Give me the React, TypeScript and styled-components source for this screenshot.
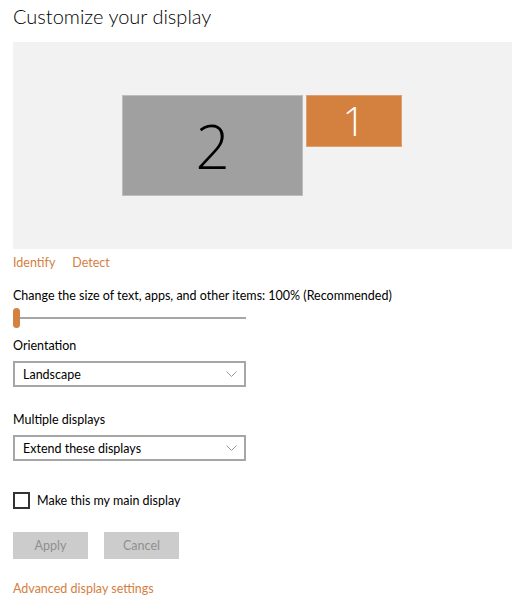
import React from "react";
import styled, { createGlobalStyle } from "styled-components";

const Global = createGlobalStyle`
  html, body { margin: 0; padding: 0; background: #ffffff; }
  body { font-family: Lato, "Open Sans", sans-serif; color: #000; }
`;

const ORANGE = "#d4803f";

const Page = styled.div`
  width: 520px;
  height: 601px;
  box-sizing: border-box;
  padding: 0 8px 0 13px;
  display: flex;
  flex-direction: column;
  overflow: hidden;
  & > * { flex-shrink: 0; }
`;

const Title = styled.h1`
  margin: 0;
  height: 42px;
  line-height: 33px;
  font-size: 20px;
  font-weight: 300;
`;

const Canvas = styled.div`
  width: 499px;
  height: 207px;
  background: #f2f2f2;
  box-sizing: border-box;
  padding: 53px 0 0 109px;
  display: flex;
  align-items: flex-start;
  gap: 3px;
`;

const Monitor = styled.div<{ $w: number; $h: number; $active?: boolean }>`
  width: ${(p) => p.$w}px;
  height: ${(p) => p.$h}px;
  box-sizing: border-box;
  background: ${(p) => (p.$active ? ORANGE : "#a0a0a0")};
  border: 1px solid ${(p) => (p.$active ? "#dea071" : "#bdbdbd")};
  color: ${(p) => (p.$active ? "#fff" : "#000")};
  display: flex;
  align-items: center;
  justify-content: center;
  font-family: "Open Sans", sans-serif;
  font-weight: 300;
  font-size: ${(p) => (p.$active ? 40 : 60)}px;
  line-height: 1;
`;

const Links = styled.div`
  display: flex;
  gap: 17px;
  margin-top: 3px;
  height: 20px;
  align-items: center;
`;

const Link = styled.a`
  color: ${ORANGE};
  font-size: 12.5px;
  text-decoration: none;
  cursor: pointer;
`;

const Label = styled.div<{ $mt: number }>`
  font-size: 12.5px;
  margin-top: ${(p) => p.$mt}px;
  height: 20px;
  line-height: 20px;
`;

const Slider = styled.div`
  position: relative;
  width: 233px;
  height: 20px;
  margin-top: 2px;
  display: flex;
  align-items: center;
`;

const Track = styled.div`
  flex: 1;
  height: 2px;
  background: #a6a6a6;
`;

const Thumb = styled.div`
  position: absolute;
  left: 0;
  top: 0;
  width: 7px;
  height: 20px;
  border-radius: 4px;
  background: ${ORANGE};
`;

const Select = styled.div`
  width: 233px;
  height: 26px;
  box-sizing: border-box;
  border: 2px solid #a6a6a6;
  margin-top: 5px;
  padding: 0 7px 0 8px;
  display: flex;
  align-items: center;
  justify-content: space-between;
  font-size: 12.5px;
`;

const Chevron = () => (
  <svg width="11" height="6" viewBox="0 0 11 6">
    <path d="M0.5 0.5 L5.5 5.5 L10.5 0.5" fill="none" stroke="#999" strokeWidth="1" />
  </svg>
);

const CheckRow = styled.label`
  display: flex;
  align-items: center;
  gap: 7px;
  margin-top: 30px;
  font-size: 12.5px;
  height: 18px;
`;

const Box = styled.span`
  width: 17px;
  height: 17px;
  box-sizing: border-box;
  border: 2px solid #333;
  display: inline-block;
`;

const Buttons = styled.div`
  display: flex;
  gap: 16px;
  margin-top: 23px;
`;

const Button = styled.button`
  width: 75px;
  height: 27px;
  border: none;
  background: #cccccc;
  color: #8f8f8f;
  font-family: inherit;
  font-size: 12.5px;
  padding: 0;
`;

const Footer = styled.div`
  margin-top: 18px;
`;

export default function App() {
  return (
    <>
      <Global />
      <Page>
        <Title>Customize your display</Title>
        <Canvas>
          <Monitor $w={181} $h={101}>2</Monitor>
          <Monitor $w={96} $h={52} $active>1</Monitor>
        </Canvas>
        <Links>
          <Link>Identify</Link>
          <Link>Detect</Link>
        </Links>
        <Label $mt={14}>Change the size of text, apps, and other items: 100% (Recommended)</Label>
        <Slider>
          <Track />
          <Thumb />
        </Slider>
        <Label $mt={8}>Orientation</Label>
        <Select>
          <span>Landscape</span>
          <Chevron />
        </Select>
        <Label $mt={23}>Multiple displays</Label>
        <Select>
          <span>Extend these displays</span>
          <Chevron />
        </Select>
        <CheckRow>
          <Box />
          <span>Make this my main display</span>
        </CheckRow>
        <Buttons>
          <Button>Apply</Button>
          <Button>Cancel</Button>
        </Buttons>
        <Footer>
          <Link>Advanced display settings</Link>
        </Footer>
      </Page>
    </>
  );
}
